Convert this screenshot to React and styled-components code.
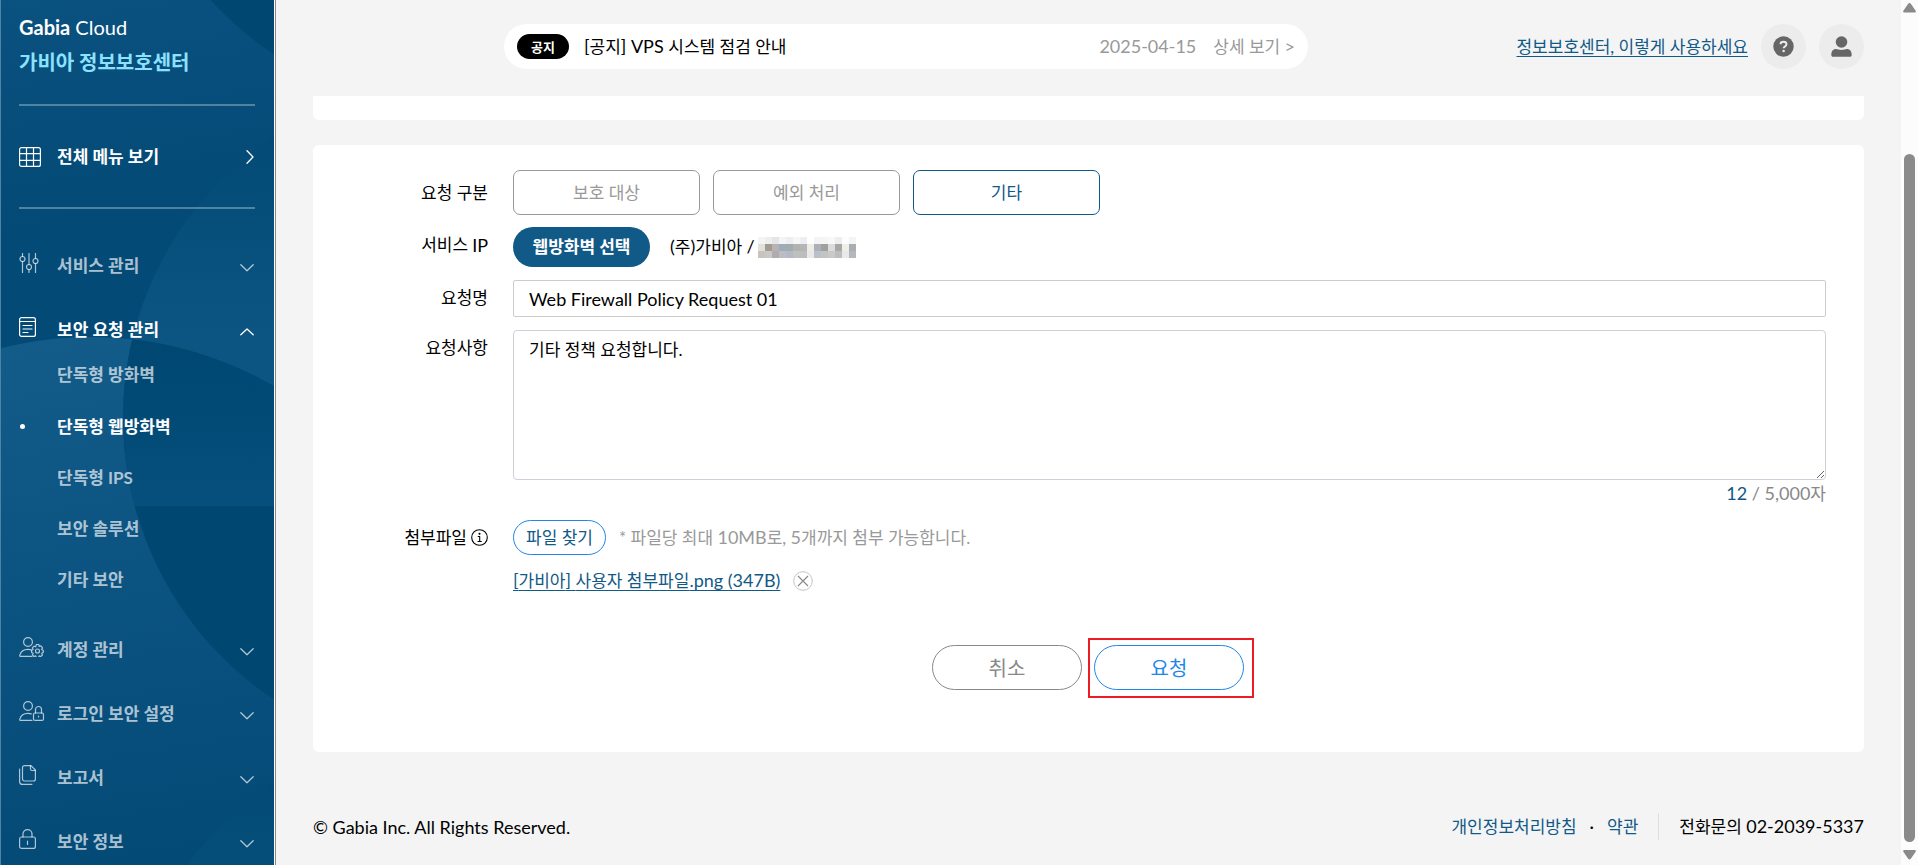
import React, { useState } from "react";
import styled, { createGlobalStyle } from "styled-components";

const GlobalStyle = createGlobalStyle`
  *, *::before, *::after { box-sizing: border-box; }
  body {
    margin: 0;
    background: #f4f4f4;
    color: #000;
    font-family: Lato, "Noto Sans CJK KR", sans-serif;
    font-size: 17px;
    line-height: 24px;
  }
  button, input, textarea { font: inherit; color: inherit; }
  a { color: inherit; text-decoration: none; }
  ul { list-style: none; margin: 0; padding: 0; }
`;

const Shell = styled.div`
  display: flex;
  min-height: 100vh;
`;

/* Latin letters and digits are set one step larger than Hangul. */
const Latin = styled.span`
  font-size: 18px;
  line-height: 18px;
`;

/* ---------- sidebar ---------- */

const Sidebar = styled.aside`
  position: sticky;
  top: 0;
  flex: 0 0 276px;
  height: 100vh;
  padding: 15px 20px 0 18px;
  border-left: 1px solid #4f83a5;
  border-right: 1px solid #8a8a8a;
  box-shadow: inset -1px 0 0 #fff;
  color: #fff;
  overflow: hidden;
`;

const Backdrop = styled.svg`
  position: absolute;
  top: 0;
  left: 0;
  width: 273px;
  height: 100%;
`;

const SidebarBody = styled.div`
  position: relative;
`;

const BrandBlock = styled.div`
  padding-bottom: 28px;
`;

const Brand = styled.a`
  display: block;
  font-size: 20px;
`;

const BrandSub = styled.a`
  display: block;
  margin-top: 9px;
  font-size: 20px;
  line-height: 28px;
  font-weight: 700;
  color: #8be2ff;
`;

const Rule = styled.hr`
  height: 2px;
  margin: 0;
  border: 0;
  background: rgba(255, 255, 255, 0.3);
`;

const AllMenu = styled.button`
  display: flex;
  align-items: center;
  width: 100%;
  height: 101px;
  padding: 0 1px 0 0;
  border: 0;
  background: none;
  text-align: left;
  font-weight: 700;
  cursor: pointer;
`;

const MenuButton = styled(AllMenu)`
  height: 64px;
  color: ${(p) => (p.$open ? "#fff" : "rgba(255, 255, 255, 0.68)")};

  > svg { margin-top: 3px; }
`;

const IconSlot = styled.span`
  display: flex;
  width: 38px;
  margin-bottom: ${(p) => (p.$raised ? "6px" : "0")};
`;

const MenuLabel = styled.span`
  flex: 1;
`;

const MenuList = styled.ul`
  padding-top: 25px;
`;

const SubList = styled.ul`
  padding: 0 0 13px;
`;

const SubItem = styled.li`
  display: flex;
  align-items: center;
  height: 51px;

  &:first-child { height: 39px; padding-bottom: 13px; }
`;

const SubLink = styled.a`
  display: flex;
  align-items: center;
  font-weight: 700;
  color: ${(p) => (p.$active ? "#fff" : "rgba(255, 255, 255, 0.68)")};

  &::before {
    content: "";
    width: 5px;
    height: 5px;
    margin: 0 32px 0 1px;
    border-radius: 50%;
    background: ${(p) => (p.$active ? "#fff" : "transparent")};
  }
`;

/* ---------- main column ---------- */

const Main = styled.main`
  flex: 1;
  min-width: 0;
  display: flex;
  flex-direction: column;
  padding: 0 37px;
`;

const Header = styled.header`
  display: flex;
  align-items: center;
  height: 96px;
  padding: 0 0 3px 191px;
`;

const Notice = styled.section`
  flex: 0 1 804px;
  display: flex;
  align-items: center;
  height: 45px;
  padding: 0 13px;
  border-radius: 23px;
  background: #fff;
`;

const Badge = styled.span`
  width: 52px;
  height: 25px;
  margin-right: 15px;
  border-radius: 13px;
  background: #000;
  color: #fff;
  font-size: 13px;
  font-weight: 700;
  line-height: 27px;
  text-align: center;
`;

const NoticeTitle = styled.span`
  flex: 1;
`;

const NoticeMeta = styled.span`
  margin-left: 17px;
  color: #999;
`;

const Tools = styled.div`
  display: flex;
  align-items: center;
  gap: 13px;
  margin-left: auto;
`;

const GuideLink = styled.a`
  color: #115987;
  text-decoration: underline;
  text-underline-offset: 3px;
`;

const RoundButton = styled.button`
  display: grid;
  place-items: center;
  width: 45px;
  height: 45px;
  padding: 0;
  border: 0;
  border-radius: 50%;
  background: #ececec;
  color: #666;
  cursor: pointer;
`;

const CardTail = styled.div`
  height: 24px;
  margin-bottom: 25px;
  border-radius: 0 0 6px 6px;
  background: #fff;
`;

const Card = styled.form`
  padding: 25px 38px 62px 0;
  border-radius: 6px;
  background: #fff;
`;

const Row = styled.div`
  display: grid;
  grid-template-columns: 175px minmax(0, 1fr);
  column-gap: 25px;
  margin-bottom: ${(p) => p.$gap}px;
`;

const RowLabel = styled.label`
  display: flex;
  align-items: center;
  justify-content: flex-end;
  gap: 4px;
  height: ${(p) => p.$height}px;
`;

const Inline = styled.div`
  display: flex;
  align-items: center;
  gap: ${(p) => p.$gap}px;
`;

const Choice = styled.button`
  width: 187px;
  height: 45px;
  border: 1px solid ${(p) => (p.$active ? "#115987" : "#999")};
  border-radius: 7px;
  background: #fff;
  color: ${(p) => (p.$active ? "#115987" : "#999")};
  cursor: pointer;
`;

const PickButton = styled.button`
  width: 137px;
  height: 40px;
  padding: 0;
  border: 0;
  border-radius: 20px;
  background: #115987;
  color: #fff;
  font-weight: 700;
  cursor: pointer;
`;

const Target = styled.span`
  display: flex;
  align-items: center;
  gap: 3px;
`;

const TextInput = styled.input`
  width: 100%;
  height: 37px;
  padding: 0 15px;
  border: 1px solid #ccc;
  border-radius: 2px;
  background: #fff;
  font-size: 18px;
`;

const TextArea = styled.textarea`
  display: block;
  width: 100%;
  height: 150px;
  padding: 7px 15px;
  border: 1px solid #ced0da;
  border-radius: 4px;
  background: #fff;
  resize: vertical;
`;

const Counter = styled.p`
  margin: 2px 0 0;
  text-align: right;
  color: #888;

  strong { font-weight: 400; color: #115987; }
`;

const FileButton = styled.button`
  width: 93px;
  height: 35px;
  padding: 0;
  border: 1px solid #1f87e8;
  border-radius: 18px;
  background: #fff;
  color: #115987;
  cursor: pointer;
`;

const Hint = styled.span`
  color: #999;
`;

const FileLine = styled(Inline)`
  margin-top: 14px;
`;

const IconButton = styled.button`
  display: flex;
  padding: 0;
  border: 0;
  background: none;
  cursor: pointer;
`;

const Actions = styled.div`
  display: flex;
  justify-content: center;
  gap: 12px;
  padding-left: 37px;
  margin-top: 52px;
`;

const ActionButton = styled.button`
  width: 150px;
  height: 45px;
  border: 1px solid ${(p) => (p.$primary ? "#1f87e8" : "#888")};
  border-radius: 23px;
  background: #fff;
  color: ${(p) => (p.$primary ? "#1f87e8" : "#888")};
  font-size: 20px;
  cursor: pointer;
`;

const Highlight = styled.div`
  position: relative;
  display: flex;

  &::after {
    content: "";
    position: absolute;
    inset: -7px -10px -8px -6px;
    border: 2px solid #ed1c24;
    pointer-events: none;
  }
`;

const Footer = styled.footer`
  display: flex;
  align-items: center;
  justify-content: space-between;
  height: 27px;
  margin: 61px 0 25px;
`;

const FooterLinks = styled.div`
  display: flex;
  align-items: center;

  a { color: #115987; }
`;

const Dot = styled.span`
  margin: 0 13px;
`;

const Phone = styled.span`
  margin-left: 20px;
  padding-left: 20px;
  border-left: 1px solid #dcdfe6;
  line-height: 27px;
`;

/* ---------- scroll track ---------- */

const Track = styled.div`
  position: sticky;
  top: 0;
  flex: 0 0 17px;
  display: flex;
  flex-direction: column;
  align-items: center;
  height: 100vh;
  padding: 3px 2px 5px 2px;
  background: #fcfcfc;
`;

const Thumb = styled.div`
  flex: 1;
  width: 11px;
  margin: 141px 0 8px;
  border-radius: 6px;
  background: #8a8a8a;
`;

/* ---------- drawings ---------- */

const Line = ({ w, h, children, sw = 1 }) => (
  <svg width={w} height={h} viewBox={`0 0 ${w} ${h}`} fill="none" stroke="currentColor" strokeWidth={sw} strokeLinecap="round" strokeLinejoin="round" aria-hidden="true">
    {children}
  </svg>
);

const GridIcon = () => (
  <Line w={22} h={20} sw={1.2}>
    <rect x=".6" y=".6" width="20.8" height="18.8" rx="2" />
    <path d="M.6 6.6h20.8M.6 13.4h20.8M7.5.6v18.8M14.5.6v18.8" />
  </Line>
);

const SlidersIcon = () => (
  <Line w={20} h={20} sw={1.2}>
    <path d="M3.5.5v3M3.5 8.500v11M10 .5v11M10 16.500v3M16.500.5v5M16.500 10.500v9" />
    <circle cx="3.500" cy="6" r="2.500" />
    <circle cx="10" cy="14" r="2.500" />
    <circle cx="16.500" cy="8" r="2.500" />
  </Line>
);

const DocIcon = () => (
  <Line w={17} h={20} sw={1.2}>
    <rect x=".6" y=".6" width="15.800" height="18.800" rx="2" />
    <path d="M.5 4.500h16M4 8.500h9M4 12h9M4 15.500h5" />
  </Line>
);

const UserPath = () => (
  <>
    <circle cx="9" cy="5" r="4.400" />
    <path d="M13 19.400H1.700C.9 19.400.6 19 .8 18.200 1.800 14.500 5 12.300 9 12.300c1.300 0 2.400.2 3.200.6" />
  </>
);

const UserGearIcon = () => (
  <Line w={26} h={20} sw={1.2}>
    <UserPath />
    <path d="M17.300 7.500h2.400l.5 1.800 1.700-.5 1.700 2-.9 1.600 1.600 1v2l-1.600.9.7 1.700-1.700 1.600-1.600-.7-.6 1.600h-2.200l-.6-1.600-1.700.6-1.600-1.600.7-1.600-1.500-.9v-2l1.500-.9-.7-1.600 1.600-1.700 1.700.6z" />
    <circle cx="18.500" cy="14" r="2" />
  </Line>
);

const UserLockIcon = () => (
  <Line w={26} h={20} sw={1.2}>
    <UserPath />
    <rect x="14.500" y="12" width="10" height="7.400" rx="1.500" />
    <path d="M16.500 12V8.500a3 3 0 0 1 6 0V12M19.500 15v1" />
  </Line>
);

const ReportIcon = () => (
  <Line w={17} h={20} sw={1.2}>
    <path d="M5.500.6H12l4.400 4.400v9a2 2 0 0 1-2 2H5.500a2 2 0 0 1-2-2V2.600a2 2 0 0 1 2-2z" />
    <path d="M11.500.7V4a1.500 1.500 0 0 0 1.500 1.500h3.300M.6 4v12.400a3 3 0 0 0 3 3h9.300" />
  </Line>
);

const LockIcon = () => (
  <Line w={17} h={20} sw={1.2}>
    <rect x=".6" y="8" width="15.800" height="11.400" rx="2" />
    <path d="M4 8V5a4.500 4.400 0 0 1 9 0v3M8.500 12v3.500" />
  </Line>
);

const ChevronDown = () => <Line w={14} h={8} sw={1.3}><path d="M.8.8 7 6.800 13.200.8" /></Line>;
const ChevronUp = () => <Line w={14} h={8} sw={1.3}><path d="M.8 6.800 7 1l6.200 5.800" /></Line>;
const ChevronRight = () => <Line w={8} h={14} sw={1.3}><path d="M1 .8 7 7l-6 6.200" /></Line>;

const HelpIcon = () => (
  <svg width="21" height="21" viewBox="0 0 21 21" aria-hidden="true">
    <circle cx="10.500" cy="10.500" r="10.200" fill="#666" />
    <path d="M7.500 8.300C7.500 6.600 8.700 5.800 10.500 5.800s3 .9 3 2.500c0 1.300-.8 1.800-1.700 2.300-.8.500-1.200.8-1.200 1.700" fill="none" stroke="#ececec" strokeWidth="1.900" />
    <circle cx="10.600" cy="14.900" r="1.250" fill="#ececec" />
  </svg>
);

const PersonIcon = () => (
  <svg width="21" height="21" viewBox="0 0 21 21" fill="currentColor" aria-hidden="true">
    <circle cx="10.500" cy="6" r="5.800" />
    <path d="M.3 19c0-4 2-6 4.700-6 1.500 0 3.200 1 5.500 1s4-1 5.500-1c2.700 0 4.700 2 4.700 6 0 1.100-.7 1.800-1.800 1.800H2.100C1 20.800.3 20.100.3 19z" />
  </svg>
);

const InfoIcon = () => (
  <Line w={17} h={17} sw={1.1}>
    <circle cx="8.500" cy="8.500" r="7.800" />
    <path d="M7.200 7.500h1.500v5M7 12.500h3.300" />
    <circle cx="8.500" cy="4.800" r=".5" fill="currentColor" />
  </Line>
);

const RemoveIcon = () => (
  <svg width="20" height="20" viewBox="0 0 20 20" fill="none" aria-hidden="true">
    <circle cx="10" cy="10" r="9.300" stroke="#c4c4c4" />
    <path d="M5 5l10 10M15 5 5 15" stroke="#888" strokeWidth="1.100" />
  </svg>
);

const Arrow = ({ down }) => (
  <svg width="13" height="10" viewBox="0 0 13 10" fill="#8a8a8a" aria-hidden="true">
    <path d={down ? "M1.500 0h10c1.200 0 1.700 1 1 2L7.800 8.800c-.8 1-1.800 1-2.600 0L.5 2C-.2 1 .3 0 1.500 0z" : "M1.500 9.500h10c1.200 0 1.700-1 1-2L7.800.8C7-.3 6-.3 5.200.8L.5 7.500c-.7 1-.2 2 1 2z"} />
  </svg>
);

const MOSAIC = [
  ["#f4f4f4", "#eceeef", "#e4e5e6", "#f4f4f4", "#eceff2", "#f8f6f4", "#eceef0", "#fff", "#f4f4f5", "#f5f5f5", "#f8f8f8", "#eceeef", "#fdfdfd", "#f4f4f5"],
  ["#e0e0de", "#a59a8f", "#b5b4b3", "#9eabb8", "#a4abad", "#b2b2b2", "#b5b5b4", "#efebe5", "#adb0b8", "#a0a09d", "#dcdcdc", "#a7a7a8", "#f1eee8", "#abadb5"],
  ["#c8c3bb", "#c8c8c8", "#b0abac", "#bbbcc4", "#b3bac5", "#bfbfbf", "#bdbdbd", "#e8e9e8", "#b9c0c9", "#c3c3c3", "#c9c9c9", "#bdbdbd", "#e8eae8", "#b5b7bd"],
];

const Mosaic = () => (
  <svg width="98" height="21" viewBox="0 0 98 21" shapeRendering="crispEdges" role="img" aria-label="IP">
    {MOSAIC.map((row, y) => row.map((fill, x) => <rect key={`${x}-${y}`} x={x * 7} y={y * 7} width="7" height="7" fill={fill} />))}
  </svg>
);

const TILE = 645;

const SidebarBackdrop = () => (
  <Backdrop aria-hidden="true">
    <defs>
      <clipPath id="insideD"><circle cx="90" cy="701" r="364" /></clipPath>
      <clipPath id="insideC"><circle cx="460" cy="418" r="338" /></clipPath>
      <linearGradient id="discD" gradientUnits="userSpaceOnUse" x1="60" y1="337" x2="140" y2="860">
        <stop offset="0" stopColor="#135b89" />
        <stop offset="1" stopColor="#034a77" />
      </linearGradient>
      <linearGradient id="discC" gradientUnits="userSpaceOnUse" x1="0" y1="130" x2="0" y2="330">
        <stop offset="0" stopColor="#034a76" />
        <stop offset=".4" stopColor="#064e7a" />
        <stop offset="1" stopColor="#0c5481" />
      </linearGradient>
      <linearGradient id="overlap" gradientUnits="userSpaceOnUse" x1="0" y1="341" x2="0" y2="506">
        <stop offset="0" stopColor="#004872" />
        <stop offset=".4" stopColor="#014a76" />
        <stop offset="1" stopColor="#07507d" />
      </linearGradient>
    </defs>
    <rect width="100%" height="100%" fill="#034a76" />
    {[-TILE, 0, TILE].map((dy) => (
      <g key={dy} transform={`translate(0 ${dy})`}>
        <circle cx="90" cy="701" r="364" fill="url(#discD)" />
        <circle cx="460" cy="418" r="338" fill="url(#discC)" />
        <g clipPath="url(#insideD)">
          <circle cx="460" cy="418" r="338" fill="#004772" />
        </g>
      </g>
    ))}
    <g clipPath="url(#insideC)">
      <g clipPath="url(#insideD)">
        <rect x="100" y="330" width="180" height="176" fill="url(#overlap)" />
      </g>
    </g>
  </Backdrop>
);

/* ---------- page ---------- */

const MENU = [
  { label: "서비스 관리", icon: SlidersIcon },
  { label: "보안 요청 관리", icon: DocIcon, children: ["단독형 방화벽", "단독형 웹방화벽", "단독형 IPS", "보안 솔루션", "기타 보안"] },
  { label: "계정 관리", icon: UserGearIcon },
  { label: "로그인 보안 설정", icon: UserLockIcon },
  { label: "보고서", icon: ReportIcon },
  { label: "보안 정보", icon: LockIcon },
];

const CHOICES = ["보호 대상", "예외 처리", "기타"];

export default function App() {
  const [choice, setChoice] = useState("기타");
  return (
    <>
      <GlobalStyle />
      <Shell>
        <Sidebar>
          <SidebarBackdrop />
          <SidebarBody>
            <BrandBlock>
              <Brand href="#"><b>Gabia</b> Cloud</Brand>
              <BrandSub href="#">가비아 정보보호센터</BrandSub>
            </BrandBlock>
            <Rule />
            <AllMenu type="button">
              <IconSlot><GridIcon /></IconSlot>
              <MenuLabel>전체 메뉴 보기</MenuLabel>
              <ChevronRight />
            </AllMenu>
            <Rule />
            <MenuList>
              {MENU.map(({ label, icon: Icon, children }) => (
                <li key={label}>
                  <MenuButton type="button" $open={!!children} aria-expanded={!!children}>
                    <IconSlot $raised><Icon /></IconSlot>
                    <MenuLabel>{label}</MenuLabel>
                    {children ? <ChevronUp /> : <ChevronDown />}
                  </MenuButton>
                  {children && (
                    <SubList>
                      {children.map((c) => (
                        <SubItem key={c}>
                          <SubLink href="#" $active={c === "단독형 웹방화벽"}>{c}</SubLink>
                        </SubItem>
                      ))}
                    </SubList>
                  )}
                </li>
              ))}
            </MenuList>
          </SidebarBody>
        </Sidebar>

        <Main>
          <Header>
            <Notice>
              <Badge>공지</Badge>
              <NoticeTitle><Latin>[</Latin>공지<Latin>] VPS </Latin>시스템 점검 안내</NoticeTitle>
              <NoticeMeta><Latin>2025-04-15</Latin></NoticeMeta>
              <NoticeMeta as="a" href="#">상세 보기 <Latin>&gt;</Latin></NoticeMeta>
            </Notice>
            <Tools>
              <GuideLink href="#">정보보호센터, 이렇게 사용하세요</GuideLink>
              <RoundButton type="button" aria-label="도움말"><HelpIcon /></RoundButton>
              <RoundButton type="button" aria-label="내 계정"><PersonIcon /></RoundButton>
            </Tools>
          </Header>

          <CardTail />

          <Card onSubmit={(e) => e.preventDefault()}>
            <Row $gap={12}>
              <RowLabel as="span" $height={45}>요청 구분</RowLabel>
              <Inline $gap={13}>
                {CHOICES.map((c) => (
                  <Choice key={c} type="button" $active={c === choice} aria-pressed={c === choice} onClick={() => setChoice(c)}>{c}</Choice>
                ))}
              </Inline>
            </Row>
            <Row $gap={13}>
              <RowLabel as="span" $height={36}>서비스 <Latin>IP</Latin></RowLabel>
              <Inline $gap={20}>
                <PickButton type="button">웹방화벽 선택</PickButton>
                <Target><span><Latin>(</Latin>주<Latin>)</Latin>가비아 <Latin>/</Latin></span><Mosaic /></Target>
              </Inline>
            </Row>
            <Row $gap={13}>
              <RowLabel htmlFor="title" $height={36}>요청명</RowLabel>
              <TextInput id="title" defaultValue="Web Firewall Policy Request 01" />
            </Row>
            <Row $gap={14}>
              <RowLabel htmlFor="details" $height={36}>요청사항</RowLabel>
              <div>
                <TextArea id="details" defaultValue="기타 정책 요청합니다." />
                <Counter><Latin><strong>12</strong> / 5,000</Latin>자</Counter>
              </div>
            </Row>
            <Row $gap={0}>
              <RowLabel as="span" $height={35}>첨부파일 <InfoIcon /></RowLabel>
              <div>
                <Inline $gap={13}>
                  <FileButton type="button">파일 찾기</FileButton>
                  <Hint>* 파일당 최대 <Latin>10MB</Latin>로, <Latin>5</Latin>개까지 첨부 가능합니다.</Hint>
                </Inline>
                <FileLine $gap={13}>
                  <GuideLink href="#"><Latin>[</Latin>가비아<Latin>] </Latin>사용자 첨부파일<Latin>.png (347B)</Latin></GuideLink>
                  <IconButton type="button" aria-label="첨부파일 삭제"><RemoveIcon /></IconButton>
                </FileLine>
              </div>
            </Row>
            <Actions>
              <ActionButton type="button">취소</ActionButton>
              <Highlight>
                <ActionButton type="submit" $primary>요청</ActionButton>
              </Highlight>
            </Actions>
          </Card>

          <Footer>
            <Latin>© Gabia Inc. All Rights Reserved.</Latin>
            <FooterLinks>
              <a href="#">개인정보처리방침</a>
              <Dot>·</Dot>
              <a href="#">약관</a>
              <Phone>전화문의 <Latin>02-2039-5337</Latin></Phone>
            </FooterLinks>
          </Footer>
        </Main>

        <Track>
          <Arrow />
          <Thumb />
          <Arrow down />
        </Track>
      </Shell>
    </>
  );
}
